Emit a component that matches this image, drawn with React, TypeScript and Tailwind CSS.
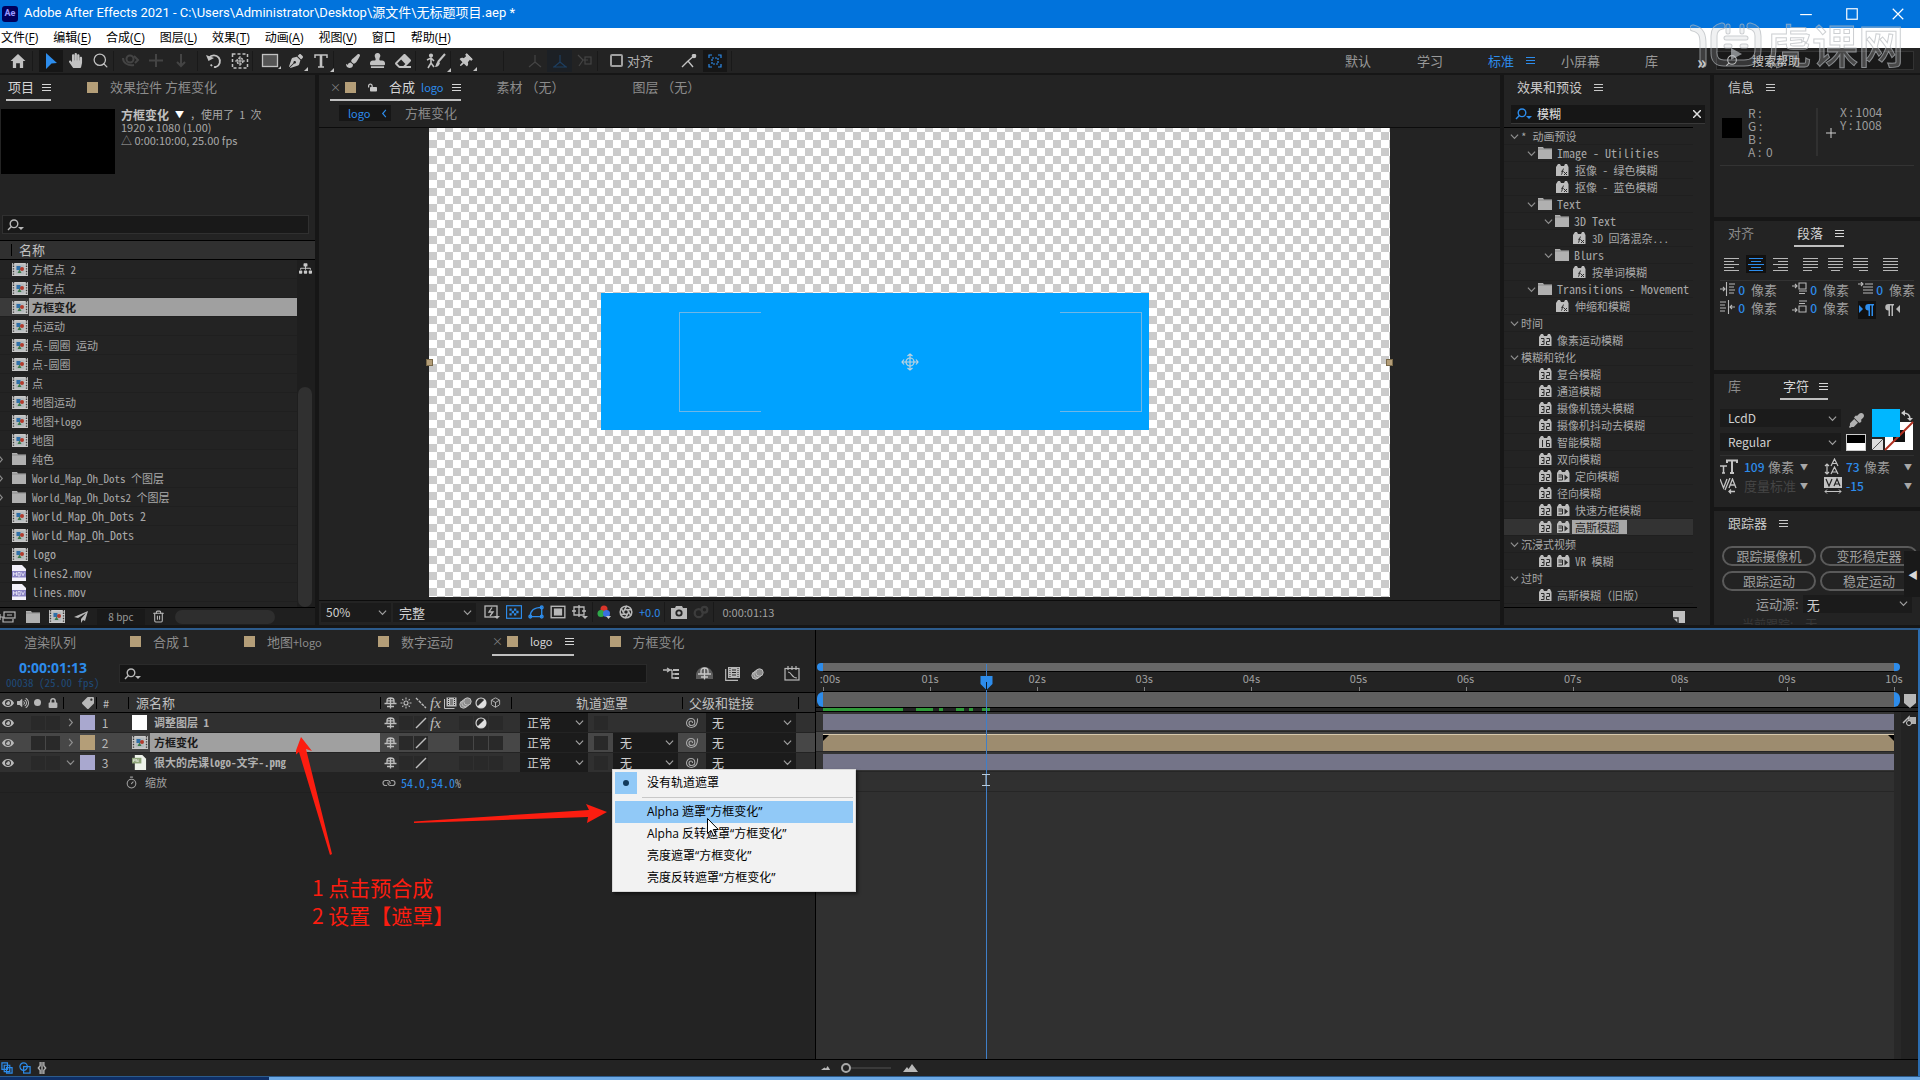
import React from "react";
import {
  FaHandPaper, FaPaintBrush, FaStamp, FaEraser, FaLock, FaLockOpen, FaVolumeUp, FaTag, FaPenNib,
  FaThumbtack, FaEyeDropper, FaSitemap, FaEye,
} from "react-icons/fa";
import { Search, Trash2, Box, Camera, Link, Aperture, Timer } from "lucide-react";

type Kids = { children?: React.ReactNode };

/* ---------- small drawings ---------- */

const Chevron = ({ open = true, className = "" }: { open?: boolean; className?: string }) => (
  <svg viewBox="0 0 10 10" className={`size-[9px] shrink-0 ${className}`} fill="none" stroke="currentColor" strokeWidth="1.3">
    {open ? <path d="M1 3l4 4 4-4" /> : <path d="M3.5 1l3.5 4-3.5 4" />}
  </svg>
);

const MenuLines = ({ className = "" }: { className?: string }) => (
  <svg viewBox="0 0 9 9" className={`size-[9px] shrink-0 ${className}`} stroke="currentColor" strokeWidth="1">
    <path d="M0 1.5h9M0 4.5h9M0 7.5h9" />
  </svg>
);

const Swatch = () => <span className="size-[11px] shrink-0 bg-[#b49e78]" />;

const Magnifier = ({ className = "text-[#b8b8b8]" }: { className?: string }) => (
  <svg viewBox="0 0 18 12" className={`h-3 w-[18px] shrink-0 ${className}`} fill="none" stroke="currentColor" strokeWidth="1.4">
    <circle cx="7" cy="4.8" r="3.8" />
    <path d="M4.3 7.6L1 11" />
    <path d="M11 8h6l-3 3z" fill="currentColor" stroke="none" />
  </svg>
);

const FilmIcon = () => (
  <svg viewBox="0 0 16 13" className="h-[13px] w-4 shrink-0">
    <rect width="16" height="13" fill="#c9c9c9" />
    <path d="M1.5 0v13M14.5 0v13" stroke="#3a3a3a" strokeWidth="1.4" strokeDasharray="1.4 1.2" />
    <rect x="3.5" y="1.5" width="9" height="10" fill="#b4babd" />
    <rect x="4.5" y="3" width="4" height="4" fill="#2f6fa8" />
    <circle cx="10" cy="6" r="2" fill="#b23a2c" />
    <path d="M5.5 10l2-3.5 2 3.5z" fill="#3c7a4a" />
  </svg>
);

const FolderIcon = ({ className = "" }: { className?: string }) => (
  <svg viewBox="0 0 14 12" className={`h-3 w-3.5 shrink-0 ${className}`} fill="#b0b0b0">
    <path d="M0 0h5l1 1.5h8V12H0z" />
    <path d="M0 2h14" stroke="#777" strokeWidth=".6" />
  </svg>
);

const MovIcon = () => (
  <svg viewBox="0 0 14 16" className="h-4 w-3.5 shrink-0">
    <path d="M0 0h10l4 4v12H0z" fill="#f2f0fa" />
    <rect y="6" width="14" height="6.5" fill="#8a83c4" />
    <path d="M1.5 11V7.5l1.5 2 1.5-2V11M6 7.5h2.2V11H6zM9.5 7.5l1.5 3.3 1.5-3.3" fill="none" stroke="#efeefa" strokeWidth=".8" />
  </svg>
);

const PngIcon = () => (
  <svg viewBox="0 0 16 16" className="size-[15px] shrink-0">
    <path d="M3 0h8l4 4v12H3z" fill="#eef2ea" />
    <rect y="3" width="10" height="6" fill="#8da377" />
    <path d="M1.5 7.5v-3h2v1.5h-2M4.5 7.5v-3l2 3v-3" stroke="#eef2ea" strokeWidth=".7" fill="none" />
  </svg>
);

const PresetIcon = () => (
  <svg viewBox="0 0 13 12" className="h-3 w-[13px] shrink-0">
    <path d="M0 3l2-3h2l1 2h3l1-2h2l1.5 3v9H0z" fill="#bdbdbd" />
    <path d="M5 10.5c1 0 1-1 1.3-3S7 5 8 5M5.3 7.3h2.5M8 8l3 3M11 8l-3 3" stroke="#2a2a2a" strokeWidth="1" fill="none" />
  </svg>
);

const BadgeIcon = ({ n }: { n: "32" | "16" | "gpu" }) => (
  <svg viewBox="0 0 13 12" className="h-3 w-[13px] shrink-0">
    <path d="M0 3l2-3h2l1 2h3l1-2h2l1.5 3v9H0z" fill="#bdbdbd" />
    {n === "32" && <path d="M2 4.5h3v3H3M5 7.5v3H2M7.5 4.5h3v3h-3v3h3" stroke="#2a2a2a" strokeWidth="1" fill="none" />}
    {n === "16" && <path d="M3.5 4v7M10.5 4.5h-3v6h3v-3h-3" stroke="#2a2a2a" strokeWidth="1" fill="none" />}
    {n === "gpu" && (
      <g>
        <path d="M1.5 5h4v2h-4M5.5 7v3h-4" stroke="#2a2a2a" strokeWidth="1" fill="none" />
        <path d="M7.5 4.5v6l3.5-3z" fill="#2a2a2a" />
      </g>
    )}
  </svg>
);

const ShyIcon = () => (
  <svg viewBox="0 0 13 12" className="h-3 w-[13px] shrink-0" fill="none" stroke="#bdbdbd" strokeWidth="1.3">
    <path d="M3 6V3.5C3 1.8 4.4 1 6.5 1S10 1.8 10 3.5V6M.5 6.5h12M3 9.5h7M6.500 1v10.500M3.500 3.800h6" />
  </svg>
);
const SunIcon = () => (
  <svg viewBox="0 0 12 12" className="size-3 shrink-0" fill="none" stroke="#bdbdbd" strokeWidth="1.1">
    <circle cx="6" cy="6" r="2" />
    <path d="M6 .5v2M6 9.5v2M.5 6h2M9.5 6h2M2.200 2.200l1.200 1.200M8.600 8.600l1.200 1.200M2.200 9.800l1.200-1.200M8.600 3.400l1.200-1.200" />
  </svg>
);
const SlashIcon = ({ back = false }: { back?: boolean }) => (
  <svg viewBox="0 0 12 12" className="size-3 shrink-0" stroke="#bdbdbd" strokeWidth="1.4">
    {back ? <path d="M1 1l10 10" strokeDasharray="3 1" /> : <path d="M1 11L11 1" />}
  </svg>
);
const FxIcon = () => <span className="font-['Liberation_Serif',serif] text-[15px] leading-3 text-[#bdbdbd] italic">fx</span>;
const FrameBlendIcon = () => (
  <svg viewBox="0 0 13 12" className="h-3 w-[13px] shrink-0">
    <path d="M2.5 .5h10v9h-10z" fill="#bdbdbd" />
    <path d="M.5 2v9.500h10" stroke="#bdbdbd" fill="none" />
    <path d="M4.500 1v8M10.500 1v8" stroke="#2a2a2a" strokeDasharray="1 1" />
    <path d="M6 3h3M6 5h3M6 7h3" stroke="#2a2a2a" strokeWidth=".8" />
  </svg>
);
const MotionBlurIcon = () => (
  <svg viewBox="0 0 13 12" className="h-3 w-[13px] shrink-0" fill="#8a8a8a" stroke="#c4c4c4" strokeWidth=".9">
    <circle cx="4.5" cy="7.5" r="3.7" />
    <circle cx="6.5" cy="6" r="3.7" />
    <circle cx="8.5" cy="4.5" r="3.7" />
  </svg>
);
const AdjustIcon = () => (
  <svg viewBox="0 0 12 12" className="size-3 shrink-0">
    <circle cx="6" cy="6" r="5" fill="none" stroke="#d0d0d0" strokeWidth="1.2" />
    <path d="M9.600 2.400A5 5 0 112.400 9.600z" fill="#e0e0e0" />
  </svg>
);
const SpiralIcon = () => (
  <svg viewBox="0 0 14 12" className="h-3 w-3.5" fill="none" stroke="#a8a8a8" strokeWidth="1.1">
    <path d="M12.5 1.5c.5 5-2 9-6 9C3.500 10.500 1.500 8.500 1.500 6S3.500 1.500 6 1.500s3.800 1.800 3.800 4S8.200 8.500 6.500 8.500 4 7.500 4 6.200 5 4 6 4s1.600.800 1.400 2" />
  </svg>
);

const AlignLines = ({ rows, className = "" }: { rows: string; className?: string }) => (
  <svg viewBox="0 0 16 14" className={`h-3.5 w-4 shrink-0 ${className}`} stroke="currentColor" strokeWidth="1" fill="none">
    <path d={rows} />
  </svg>
);

/* ---------- shared parts ---------- */

const Tab = ({ active, children, className = "gap-2" }: Kids & { active?: boolean; className?: string }) => (
  <button
    className={`flex h-[26px] shrink-0 items-center border-b-2 text-[13px] whitespace-nowrap ${
      active ? "border-[#c0c0c0] text-[#d6d6d6]" : "border-transparent text-[#8c8c8c]"
    } ${className}`}
  >
    {children}
  </button>
);

function Drop({ label, value, className = "", selectClass = "pl-2" }: { label: string; value: string; className?: string; selectClass?: string }) {
  return (
    <span className={`relative flex items-center bg-[#1b1b1b] ${className}`}>
      <select aria-label={label} className={`h-full w-full appearance-none bg-transparent text-[#d0d0d0] outline-none ${selectClass}`}>
        <option>{value}</option>
      </select>
      <Chevron className="pointer-events-none absolute right-1 text-[#a0a0a0]" />
    </span>
  );
}

const Sep = ({ className = "" }: { className?: string }) => <span className={`h-5 w-px shrink-0 bg-[#191919] ${className}`} />;

/* ---------- title, menus, toolbar ---------- */

const menus = ["文件(F)", "编辑(E)", "合成(C)", "图层(L)", "效果(T)", "动画(A)", "视图(V)", "窗口", "帮助(H)"];

function MenuLabel({ text }: { text: string }) {
  const m = text.match(/^(.*\()(.)(\))$/);
  return m ? <>{m[1]}<u className="underline-offset-2">{m[2]}</u>{m[3]}</> : <>{text}</>;
}

const ToolBtn = ({ label, active, children, dim, className = "w-[25px]" }: Kids & { label: string; active?: boolean; dim?: boolean; className?: string }) => (
  <button
    aria-label={label}
    className={`flex h-[22px] shrink-0 items-center justify-center ${className} ${active ? "bg-[#161616] text-[#2d8ceb]" : dim ? "text-[#444]" : "text-[#c2c2c2]"}`}
  >
    {children}
  </button>
);

const Corner = ({ children }: Kids) => (
  <span className="relative flex items-center">
    {children}
    <svg viewBox="0 0 4 4" className="absolute -right-[5px] -bottom-[3px] size-1" fill="currentColor"><path d="M4 0v4H0z" /></svg>
  </span>
);

function Header() {
  return (
    <header className="shrink-0">
      <div className="flex h-7 items-center bg-[#0173dc] pl-0.5 font-['Roboto','Noto_Sans_CJK_SC',sans-serif] text-[13px] text-white">
        <span className="mr-1.5 flex size-4 items-center justify-center rounded-[3px] bg-[#00005b] text-[9px] font-bold text-[#9999ff]">Ae</span>
        <h1 className="-mt-0.5">Adobe After Effects 2021 - C:\Users\Administrator\Desktop\源文件\无标题项目.aep *</h1>
        <div className="ml-auto flex items-center gap-8 pr-[15px]">
          <button aria-label="最小化"><svg viewBox="0 0 12 12" className="size-3.5" stroke="white"><path d="M1 6.500h10" /></svg></button>
          <button aria-label="最大化"><svg viewBox="0 0 12 12" className="size-3.5" stroke="white" fill="none"><rect x="1.500" y="1.500" width="9" height="9" /></svg></button>
          <button aria-label="关闭"><svg viewBox="0 0 12 12" className="size-3.5" stroke="white"><path d="M1.500 1.500l9 9M10.500 1.500l-9 9" /></svg></button>
        </div>
      </div>
      <nav className="flex h-5 items-center gap-[15px] bg-white pl-px font-['Open_Sans','Noto_Sans_CJK_SC',sans-serif] text-[12px] text-black">
        {menus.map((m) => <button key={m} className="whitespace-nowrap"><MenuLabel text={m} /></button>)}
      </nav>
      <div className="flex h-[25px] items-center bg-[#232323]">
        <div className="flex items-center pl-1">
          <ToolBtn label="主页" className="w-7"><svg viewBox="0 0 16 15" className="h-[14px] w-4" fill="currentColor"><path d="M8 0l8 7.500h-2.500V15H10v-5H6v5H2.500V7.500H0z" /></svg></ToolBtn>
          <Sep />
          <ToolBtn label="选取工具" active className="ml-1.5 w-6"><svg viewBox="0 0 14 16" className="h-4 w-3.5" fill="currentColor"><path d="M2 0l11 10-5.500.5L2 16z" /></svg></ToolBtn>
          <ToolBtn label="手形工具"><FaHandPaper size={15} /></ToolBtn>
          <ToolBtn label="缩放工具"><Search size={17} strokeWidth={1.8} /></ToolBtn>
          <Sep />
          <ToolBtn label="绕光标旋转工具" dim className="ml-1 w-[25px]"><svg viewBox="0 0 18 14" className="h-3.5 w-[18px]" fill="none" stroke="currentColor" strokeWidth="2"><circle cx="8" cy="5" r="3.500" /><path d="M1 4c0 5 5 8 11 7M12 2l4 4-3 3" /></svg></ToolBtn>
          <ToolBtn label="在光标下移动工具" dim><svg viewBox="0 0 16 16" className="size-4" fill="none" stroke="currentColor" strokeWidth="2"><path d="M8 1v13M1 7.500h14" /></svg></ToolBtn>
          <ToolBtn label="向光标方向推拉镜头工具" dim><svg viewBox="0 0 16 16" className="size-4" fill="none" stroke="currentColor" strokeWidth="2"><path d="M8 1v11M4 9l4 4 4-4" /></svg></ToolBtn>
          <Sep className="ml-1" />
          <ToolBtn label="旋转工具" className="ml-1 w-[25px]"><svg viewBox="0 0 17 16" className="h-4 w-[17px]" fill="none" stroke="currentColor" strokeWidth="1.8"><path d="M3 5a6 6 0 1 1 7 9" /><path d="M10 14a6 6 0 0 1-6-4" strokeDasharray="2 2" /><path d="M0 2l2.500 6L8 5z" fill="currentColor" stroke="none" /></svg></ToolBtn>
          <ToolBtn label="锚点工具"><svg viewBox="0 0 18 16" className="h-4 w-[18px]" fill="none" stroke="currentColor" strokeWidth="1.500"><rect x="1.500" y="1" width="15" height="14" strokeDasharray="3 2" /><circle cx="9" cy="8" r="3" strokeDasharray="2 1" /><path d="M9 3v10M4 8h10" strokeWidth="1" /></svg></ToolBtn>
          <Sep />
          <ToolBtn label="矩形工具" className="ml-[5px] w-[25px]"><svg viewBox="0 0 20 16" className="h-4 w-5"><rect x="1.500" y="1.500" width="15" height="12" fill="#555" stroke="currentColor" strokeWidth="1.300" /><path d="M20 16h-3l3-3z" fill="currentColor" /></svg></ToolBtn>
          <ToolBtn label="钢笔工具"><Corner><FaPenNib size={14} /></Corner></ToolBtn>
          <ToolBtn label="文字工具"><Corner><svg viewBox="0 0 16 16" className="size-4" fill="none" stroke="currentColor"><path d="M2 5V2h12v3" strokeWidth="1.500" /><path d="M8 2v12" strokeWidth="2.600" /><path d="M5 14h6" strokeWidth="1.500" /></svg></Corner></ToolBtn>
          <Sep />
          <ToolBtn label="画笔工具" className="ml-1.5 w-[25px]"><FaPaintBrush size={14} /></ToolBtn>
          <ToolBtn label="仿制图章工具"><FaStamp size={15} /></ToolBtn>
          <ToolBtn label="橡皮擦工具"><FaEraser size={16} /></ToolBtn>
          <Sep />
          <ToolBtn label="Roto 笔刷工具" className="ml-1.5 w-7"><Corner><svg viewBox="0 0 20 16" className="h-4 w-5" fill="none" stroke="currentColor" strokeWidth="1.600"><circle cx="5" cy="2.500" r="1.300" fill="currentColor" /><path d="M1 7l4-2 3 3M5 5v5l-3 5M5 10l3 4" /><path d="M19 1l-7 8" strokeWidth="2" /><path d="M12 8l2 2c-1 3-3 4-5 4 1-2 1-4 3-6z" fill="currentColor" stroke="none" /></svg></Corner></ToolBtn>
          <Sep />
          <ToolBtn label="人偶位置控点工具" className="w-7"><Corner><FaThumbtack size={14} className="rotate-45" /></Corner></ToolBtn>
        </div>
        <div className="ml-6 flex items-center">
          <Sep />
          <div className="ml-[18px] flex">
            <ToolBtn label="本地轴模式" dim><svg viewBox="0 0 16 14" className="h-3.5 w-4" fill="none" stroke="currentColor" strokeWidth="1.200"><path d="M8 1v7M8 8l-6 5M8 8l6 5" /></svg></ToolBtn>
            <ToolBtn label="世界轴模式" className="w-[25px] bg-[#1c2025]"><svg viewBox="0 0 16 14" className="h-3.5 w-4 text-[#1d3e60]" fill="none" stroke="currentColor" strokeWidth="1.200"><path d="M8 1v7M8 8l-6 5M8 8l6 5M1 13h14" /></svg></ToolBtn>
            <ToolBtn label="视图轴模式" dim><svg viewBox="0 0 16 14" className="h-3.5 w-4" fill="none" stroke="currentColor" strokeWidth="1.200"><path d="M1 1l5 5M6 6l-4 6M6 6h5" /><rect x="8" y="3" width="6" height="7" /></svg></ToolBtn>
          </div>
          <Sep />
          <label className="ml-3 flex items-center gap-1 text-[13px] text-[#b0b0b0]">
            <input type="checkbox" className="size-[13px] appearance-none rounded-[2px] border-2 border-[#a0a0a0]" />对齐
          </label>
          <ToolBtn label="对齐边缘" className="ml-[22px] w-7"><svg viewBox="0 0 16 14" className="h-3.5 w-4" fill="none" stroke="currentColor" strokeWidth="1.400"><path d="M1 13l6-6 5 6M7 7l7-6" /><circle cx="13" cy="2" r="1.600" fill="currentColor" /></svg></ToolBtn>
          <ToolBtn label="对齐到特性" active className="w-6"><svg viewBox="0 0 14 14" className="size-3.5" fill="none" stroke="currentColor" strokeWidth="1.200"><path d="M1 4V1h3M10 1h3v3M13 10v3h-3M4 13H1v-3" /><rect x="4" y="4" width="6" height="6" strokeDasharray="2 1" /></svg></ToolBtn>
          <Sep className="ml-1" />
        </div>
        <div className="ml-auto flex h-full items-center text-[13px] text-[#9a9a9a]">
          <button className="w-[72px] text-left">默认</button>
          <button className="w-[71px] text-left">学习</button>
          <button className="flex w-[73px] items-center gap-3 text-left text-[#2d8ceb]">标准<MenuLines /></button>
          <button className="w-[84px] text-left">小屏幕</button>
          <button className="w-[52px] text-left">库</button>
          <button aria-label="更多" className="w-[19px] text-left text-[18px] leading-4 font-bold text-[#d0d0d0]">»</button>
          <label className="mr-1.5 flex h-[19px] w-[198px] items-center border border-[#333] bg-[#191919] pl-2">
            <Search size={13} className="mr-3.5 shrink-0 -scale-x-100 text-[#c0c0c0]" />
            <input aria-label="搜索帮助" placeholder="搜索帮助" className="w-full bg-transparent text-[12px] outline-none placeholder:text-[#c8c8c8]" />
          </label>
        </div>
      </div>
    </header>
  );
}

/* ---------- project panel ---------- */

type Item = { name: string; kind: "comp" | "folder" | "mov"; sel?: boolean };
const items: Item[] = [
  { name: "方框点 2", kind: "comp" }, { name: "方框点", kind: "comp" }, { name: "方框变化", kind: "comp", sel: true },
  { name: "点运动", kind: "comp" }, { name: "点-圆圈 运动", kind: "comp" }, { name: "点-圆圈", kind: "comp" },
  { name: "点", kind: "comp" }, { name: "地图运动", kind: "comp" }, { name: "地图+logo", kind: "comp" },
  { name: "地图", kind: "comp" }, { name: "纯色", kind: "folder" }, { name: "World_Map_Oh_Dots 个图层", kind: "folder" },
  { name: "World_Map_Oh_Dots2 个图层", kind: "folder" }, { name: "World_Map_Oh_Dots 2", kind: "comp" },
  { name: "World_Map_Oh_Dots", kind: "comp" }, { name: "logo", kind: "comp" }, { name: "lines2.mov", kind: "mov" },
  { name: "lines.mov", kind: "mov" },
];

const mono = "font-['Noto_Sans_Mono_CJK_SC','Noto_Sans_CJK_SC',monospace]";
const isLatin = (s: string) => /^[\x20-\x7e]+$/.test(s);

function ProjectPanel() {
  return (
    <section className="flex w-[315px] shrink-0 flex-col bg-[#232323]">
      <div className="flex pl-1.5">
        <Tab active className="gap-2 pl-0.5">项目<MenuLines /></Tab>
        <Tab className="ml-9 gap-3"><Swatch />效果控件 方框变化</Tab>
      </div>
      <div className="mt-2 flex h-[65px] gap-1.5 pl-px">
        <div className="h-[65px] w-[114px] shrink-0 bg-black" />
        <div className="-mt-0.5 text-[11px] leading-[13px] text-[#a8a8a8]">
          <p className="flex h-[14px] items-center gap-1.5 text-[12px]"><b className="text-[#c0c0c0]">方框变化</b><span className="text-[9px] text-white">▼</span><span className={`${mono} text-[11px]`}>，使用了 1 次</span></p>
          <p>1920 x 1080 (1.00)</p>
          <p>△ 0:00:10:00, 25.00 fps</p>
        </div>
      </div>
      <label className="mt-[41px] mr-1.5 ml-0.5 flex h-[19px] items-center border border-[#303030] bg-[#191919] pl-1">
        <Magnifier />
        <input aria-label="搜索项目" className="w-full bg-transparent outline-none" />
      </label>
      <div className="mt-1.5 flex h-5 items-center border-y border-black bg-[#303030] pl-[11px] text-[13px] text-[#c0c0c0]">
        <span className="mr-[7px] h-3 w-px bg-black" />名称
      </div>
      <div className="flex min-h-0 flex-1">
        <ul className={`flex-1 ${mono} text-[#a8a8a8]`}>
          {items.map((it, i) => (
            <li key={i} className={`flex h-[19px] items-center border-b border-[#1f1f1f] whitespace-pre ${isLatin(it.name) ? "text-[12px]" : "text-[11px]"} ${it.sel ? "bg-[#3a3a3a]" : ""}`}>
              <span className="flex w-3 items-center text-[#8a8a8a]">{it.kind === "folder" && <Chevron open={false} className="-ml-1" />}</span>
              <span className="flex w-[17px] shrink-0 items-center">
                {it.kind === "comp" ? <FilmIcon /> : it.kind === "mov" ? <MovIcon /> : <FolderIcon />}
              </span>
              <span className={`flex h-full flex-1 items-center pl-[3px] ${it.sel ? "bg-[#a0a0a0] font-bold text-[#1a1a1a]" : ""}`}>{it.name}</span>
            </li>
          ))}
        </ul>
        <div className="flex w-[18px] flex-col items-center bg-[#1e1e1e] pr-0.5">
          <FaSitemap size={13} className="mt-0.5 shrink-0 text-[#c8c8c8]" />
          <span className="mt-[112px] w-[14px] flex-1 rounded-full bg-[#303030]" />
        </div>
      </div>
      <div className="flex h-[18px] items-center border-t border-black bg-[#1f1f1f] text-[#b8b8b8]">
        <button aria-label="解释素材" className="w-6"><svg viewBox="0 0 16 12" className="h-3 w-4" fill="none" stroke="currentColor" strokeWidth="1.200"><rect x="4" y="1" width="11" height="6" /><path d="M7 4h5M0 6h3v5h10V8M0 3v6" /></svg></button>
        <button aria-label="新建文件夹" className="ml-0.5 w-[23px]"><FolderIcon /></button>
        <button aria-label="新建合成" className="w-[25px]"><FilmIcon /></button>
        <button aria-label="项目设置" className="w-[23px]"><svg viewBox="0 0 14 12" className="h-3 w-3.5" fill="currentColor"><path d="M14 0L0 6l4 1 8-5-5 6v4l2-3 2 1z" /></svg></button>
        <button className="h-4 w-12 bg-[#191919] text-[10px] leading-4 text-[#999]">8 bpc</button>
        <button aria-label="删除" className="ml-[7px]"><Trash2 size={13} /></button>
        <span className="ml-2.5 h-[14px] w-[100px] rounded-full bg-[#2e2e2e]" />
      </div>
    </section>
  );
}

/* ---------- composition panel ---------- */

function CompPanel() {
  return (
    <section className="flex min-w-0 flex-1 flex-col bg-[#232323]">
      <div className="flex pl-[11px]">
        <Tab active className="gap-1.5">
          <span className="w-[9px] text-left text-[11px] text-[#808080]">×</span><Swatch />
          <FaLockOpen size={9} className="mx-1.5 -scale-x-100 text-[#c8c8c8]" />合成<span className="text-[11px] text-[#2d8ceb]">logo</span><MenuLines className="ml-0.5" />
        </Tab>
        <Tab className="ml-9">素材 （无）</Tab>
        <Tab className="ml-[68px]">图层 （无）</Tab>
      </div>
      <div className="flex h-[26px] items-center pb-0.5 pl-5 text-[13px]">
        <button className="flex h-4 w-[52px] items-center justify-between bg-[#161616] pr-0.5 pl-[9px] text-[11px] text-[#2d8ceb]">logo<Chevron open={false} className="-scale-x-100" /></button>
        <button className="ml-3.5 text-[#8c8c8c]">方框变化</button>
      </div>
      <div className="flex min-h-0 flex-1 justify-center overflow-hidden border-y border-[#0c0c0c] bg-[#232323] px-[110px]">
        <div className="relative w-full overflow-visible">
          <div className="h-[469px] bg-[repeating-conic-gradient(#cbcbcb_0_25%,#ffffff_0_50%)] bg-[length:16px_16px] bg-[position:0_4px]" />
          <div className="absolute top-[165px] left-[17.9%] h-[137px] w-[57%] bg-[#00a2ff]">
            <span className="absolute top-[19px] left-[14.2%] h-[100px] w-[15%] border-y border-l border-[#6fb6e6]" />
            <span className="absolute top-[19px] right-[1.3%] h-[100px] w-[15%] border-y border-r border-[#6fb6e6]" />
          </div>
          <svg viewBox="0 0 18 18" className="absolute top-[225px] left-1/2 size-[18px] -translate-x-1/2" fill="none" stroke="#c0d4e0" strokeWidth="1.200">
            <circle cx="9" cy="9" r="4" /><path d="M9 1v16M1 9h16M6.500 3L9 1l2.500 2M6.500 15L9 17l2.500-2M3 6.500L1 9l2 2.500M15 6.500L17 9l-2 2.500" />
          </svg>
          <span className="absolute top-[231px] -left-[3px] size-[7px] border border-[#7a6a4a] bg-[#b49e78]" />
          <span className="absolute top-[231px] -right-[3px] size-[7px] border border-[#7a6a4a] bg-[#b49e78]" />
        </div>
      </div>
      <div className="flex h-6 items-center pb-0.5 pl-0.5 text-[12px] text-[#b8b8b8]">
        <Drop label="放大率" value="50%" className="h-[19px] w-[70px]" selectClass="pl-[5px]" />
        <Drop label="分辨率" value="完整" className="ml-0.5 h-[19px] w-[83px] text-[13px]" selectClass="pl-1.5" />
        <div className="ml-2 flex items-center gap-1.5">
          <svg viewBox="0 0 16 14" className="h-3.5 w-4" fill="none" stroke="currentColor" strokeWidth="1.300"><rect x="1" y="1" width="12" height="11" /><path d="M8 2.500L5 7h4l-3 4" /><path d="M10 11h6l-3 3z" fill="currentColor" stroke="none" /></svg>
          <svg viewBox="0 0 14 12" className="h-3.5 w-4 text-[#2d8ceb]"><rect x=".5" y=".5" width="13" height="11" fill="none" stroke="currentColor" /><path d="M3 3h2v2H3zM7 3h2v2H7zM5 5h2v2H5zM9 5h2v2H9zM3 7h2v2H3zM7 7h2v2H7z" fill="currentColor" /></svg>
          <svg viewBox="0 0 14 12" className="h-3.5 w-4 text-[#2d8ceb]" fill="none" stroke="currentColor" strokeWidth="1.200"><path d="M2 10c0-5 3-8 10-8v8z" /><circle cx="2" cy="10" r="1.200" /><circle cx="12" cy="2" r="1.200" /><circle cx="12" cy="10" r="1.200" /></svg>
          <svg viewBox="0 0 14 12" className="h-3.5 w-4" stroke="currentColor" strokeWidth="1.200"><rect x="1" y="1" width="12" height="10" fill="none" /><rect x="4" y="3.500" width="6" height="5" fill="currentColor" /></svg>
          <svg viewBox="0 0 16 14" className="h-3.5 w-4" fill="none" stroke="currentColor" strokeWidth="1.300"><path d="M2 2h10v8H2zM7 0v12M0 6h4M10 6h4" /><path d="M10 11h6l-3 3z" fill="currentColor" stroke="none" /></svg>
          <Sep className="-mx-0.5" />
          <svg viewBox="0 0 14 14" className="size-[14px]"><circle cx="7" cy="4" r="3.500" fill="#d8352a" /><circle cx="4" cy="8.500" r="3.500" fill="#2fa84a" /><circle cx="9.500" cy="8.500" r="3.500" fill="#3a6fe0" /><path d="M9 11h5l-2.500 3z" fill="#ccc" /></svg>
          <Aperture size={14} strokeWidth={2.6} className="ml-0.5" />
          <span className="text-[11px] text-[#2d8ceb]">+0.0</span>
          <Sep className="-ml-0.5" />
          <svg viewBox="0 0 16 13" className="h-[13px] w-4" fill="currentColor"><path d="M5 0h6l1 2h4v11H0V2h4z" /><circle cx="8" cy="7" r="3.600" fill="#232323" /><circle cx="8" cy="7" r="1.800" /></svg>
          <svg viewBox="0 0 14 12" className="h-3.5 w-4 text-[#3c3c3c]" fill="none" stroke="currentColor" strokeWidth="2"><circle cx="5" cy="7" r="3.500" /><circle cx="10" cy="4" r="2.500" /></svg>
          <Sep className="-mx-0.5" />
          <span className="ml-1 text-[11px] text-[#a0a0a0]">0:00:01:13</span>
        </div>
      </div>
    </section>
  );
}

/* ---------- effects panel ---------- */

type Fx = { k: "cat" | "f1" | "f2" | "p1" | "p2" | "fx"; t: string; i?: "32" | "16"; gpu?: boolean; star?: boolean; sel?: boolean };
const fxRows: Fx[] = [
  { k: "cat", t: "动画预设", star: true }, { k: "f1", t: "Image - Utilities" }, { k: "p1", t: "抠像 - 绿色模糊" },
  { k: "p1", t: "抠像 - 蓝色模糊" }, { k: "f1", t: "Text" }, { k: "f2", t: "3D Text" }, { k: "p2", t: "3D 回落混杂..." },
  { k: "f2", t: "Blurs" }, { k: "p2", t: "按单词模糊" }, { k: "f1", t: "Transitions - Movement" }, { k: "p1", t: "伸缩和模糊" },
  { k: "cat", t: "时间" }, { k: "fx", t: "像素运动模糊" }, { k: "cat", t: "模糊和锐化" }, { k: "fx", t: "复合模糊" },
  { k: "fx", t: "通道模糊" }, { k: "fx", t: "摄像机镜头模糊" }, { k: "fx", t: "摄像机抖动去模糊" }, { k: "fx", t: "智能模糊", i: "16" },
  { k: "fx", t: "双向模糊" }, { k: "fx", t: "定向模糊", gpu: true }, { k: "fx", t: "径向模糊" }, { k: "fx", t: "快速方框模糊", gpu: true },
  { k: "fx", t: "高斯模糊", gpu: true, sel: true }, { k: "cat", t: "沉浸式视频" }, { k: "fx", t: "VR 模糊", gpu: true },
  { k: "cat", t: "过时" }, { k: "fx", t: "高斯模糊（旧版）" },
];
const fxPad = { cat: "pl-1.5", f1: "pl-[23px]", f2: "pl-10", p1: "pl-[52px]", p2: "pl-[69px]", fx: "pl-[35px]" };

function EffectsPanel() {
  return (
    <section className="flex w-[206px] shrink-0 flex-col bg-[#232323]">
      <div className="flex pl-[13px]"><Tab className="gap-3"><span className="text-[#c8c8c8]">效果和预设</span><MenuLines className="text-[#c8c8c8]" /></Tab></div>
      <label className="mt-1 mr-[5px] ml-[7px] flex h-[19px] items-center border-b border-[#383838] bg-[#161616] pr-1 pl-1">
        <Magnifier className="text-[#2d8ceb]" />
        <input aria-label="搜索效果" defaultValue="模糊" className="ml-1 w-full min-w-0 bg-transparent text-[12px] text-[#e0e0e0] outline-none" />
        <svg viewBox="0 0 8 8" className="size-2 shrink-0" stroke="#e0e0e0" strokeWidth="1.500"><path d="M0 0l8 8M8 0L0 8" /></svg>
      </label>
      <ul className={`mt-[3px] mr-[17px] flex-1 border-t border-black ${mono} text-[#a8a8a8]`}>
        {fxRows.map((r, i) => (
          <li key={i} className={`flex h-[17px] items-center border-b border-[#1f1f1f] whitespace-pre ${isLatin(r.t) ? "text-[12px]" : "text-[11px]"} ${fxPad[r.k]} ${r.sel ? "bg-[#333]" : ""}`}>
            {(r.k === "cat" || r.k === "f1" || r.k === "f2") && <Chevron className="mr-0.5 text-[#909090]" />}
            {r.star && <span className="mr-1.5">*</span>}
            {(r.k === "f1" || r.k === "f2") && <FolderIcon className="mr-[5px]" />}
            {(r.k === "p1" || r.k === "p2") && <span className="mr-1.5"><PresetIcon /></span>}
            {r.k === "fx" && <span className="mr-[5px] flex gap-[5px]"><BadgeIcon n={r.i ?? "32"} />{r.gpu && <BadgeIcon n="gpu" />}</span>}
            <span className={r.sel ? "-ml-[3px] bg-[#a8a8a8] pr-2 pl-[3px] leading-[14px] text-[#222]" : ""}>{r.t}</span>
          </li>
        ))}
      </ul>
      <div className="mr-[13px] flex h-[18px] items-center justify-end border-t border-black pr-3">
        <svg viewBox="0 0 12 12" className="size-3"><path d="M0 0h12v12H5L0 7z" fill="#c0c0c0" /><path d="M0 7h5v5" fill="none" stroke="#333" strokeWidth="1.500" /></svg>
      </div>
    </section>
  );
}

/* ---------- right column ---------- */

const Num = ({ v }: { v: string }) => <span className="text-[12px] font-medium text-[#2d8ceb]">{v}</span>;
const IndentIcon = ({ d }: { d: string }) => (
  <svg viewBox="0 0 16 15" className="h-[15px] w-4 shrink-0" fill="none" stroke="#b8b8b8" strokeWidth="1.100"><path d={d} /></svg>
);

const L = {
  left: "M0 1.500h15M0 4.500h10M0 7.500h15M0 10.500h10M0 13.500h15",
  center: "M1 1.500h14M3 4.500h10M0 7.500h16M3 10.500h10M1 13.500h14",
  right: "M0 1.500h15M5 4.500h10M0 7.500h15M5 10.500h10M0 13.500h15",
  jl: "M0 1.500h15M0 4.500h15M0 7.500h15M0 10.500h15M0 13.500h9",
  jc: "M0 1.500h15M0 4.500h15M0 7.500h15M0 10.500h15M3 13.500h9",
  jr: "M0 1.500h15M0 4.500h15M0 7.500h15M0 10.500h15M6 13.500h9",
  jf: "M0 1.500h15M0 4.500h15M0 7.500h15M0 10.500h15M0 13.500h15",
};

const Indent = ({ d, className = "" }: { d: string; className?: string }) => (
  <span className={`flex shrink-0 items-center ${className}`}><IndentIcon d={d} /><span className="w-[9px] text-right"><Num v="0" /></span><span className="ml-1.5 whitespace-nowrap">像素</span></span>
);
const Tri = () => <span className="text-[8px] text-[#a8a8a8]">▼</span>;

function RightColumn() {
  return (
    <aside className="relative flex w-[206px] shrink-0 flex-col gap-1 text-[13px] text-[#9c9c9c]">
      <section className="h-[142px] shrink-0 bg-[#232323]">
        <div className="flex pl-3.5"><Tab><span className="text-[#c8c8c8]">信息</span><MenuLines className="ml-1 text-[#c8c8c8]" /></Tab></div>
        <div className="mx-1.5 flex h-[65px] border-b border-[#333] pt-[5px] text-[12px] leading-[13px]">
          <span className="mt-3 ml-0.5 size-5 bg-black" />
          <dl className="ml-1.5 grid h-[52px] w-[68px] grid-cols-[18px_1fr]"><dt>R :</dt><dd /><dt>G :</dt><dd /><dt>B :</dt><dd /><dt>A :</dt><dd>0</dd></dl>
          <span className="mt-0.5 h-12 w-0.5 bg-[#303030]" />
          <svg viewBox="0 0 10 10" className="mt-[22px] ml-2 size-2.5" stroke="#d0d0d0"><path d="M5 0v10M0 5h10" /></svg>
          <div className="-mt-px ml-1"><p>X : 1004</p><p>Y : 1008</p></div>
        </div>
      </section>
      <section className="h-[149px] shrink-0 bg-[#232323]">
        <div className="flex pl-3.5"><Tab className="w-[66px]">对齐</Tab><Tab active className="gap-3 pl-[3px]">段落<MenuLines /></Tab></div>
        <div className="flex h-[33px] items-center pl-2.5 text-[#b8b8b8]">
          <AlignLines rows={L.left} />
          <span className="ml-1.5 flex h-[18px] w-5 items-center justify-center bg-[#111] text-[#2d8ceb]"><AlignLines rows={L.center} /></span>
          <AlignLines rows={L.right} className="ml-[7px]" /><AlignLines rows={L.jl} className="ml-3.5" />
          <AlignLines rows={L.jc} className="ml-[9px]" /><AlignLines rows={L.jr} className="ml-[9px]" /><AlignLines rows={L.jf} className="ml-3.5" />
        </div>
        <div className="mx-1.5 h-px bg-[#333]" />
        <div className="flex h-[17px] items-center gap-2 pl-1.5">
          <Indent className="w-16" d="M0 7h5M3 5l2 2-2 2M6.500 0v14M9 2h6M9 5h5M9 8h6M9 11h5" />
          <Indent className="w-[58px]" d="M0 4h5M3 2l2 2-2 2M7 1h7v6H7zM7 9h8M7 11.500h6" />
          <Indent className="w-[58px]" d="M0 2h5M3 0l2 2-2 2M7 2h8M5 5h10M5 8h10M5 11h10" />
        </div>
        <div className="flex h-[19px] items-center gap-2 pl-1.5">
          <Indent className="w-16" d="M0 2h6M0 5h5M0 8h6M0 11h5M8.500 0v14M15 7h-5M12 5l-2 2 2 2" />
          <Indent className="w-[58px]" d="M7 1h8M7 3.500h6M7 6h7v6H7zM0 10h5M3 8l2 2-2 2" />
          <span className="mt-1 flex h-[18px] w-[18px] items-center justify-center bg-[#111]"><svg viewBox="0 0 16 12" className="h-3 w-4" fill="#2d8ceb"><path d="M0 1l4 4-4 4zM15 0v1.500h-1V12h-1.500V1.500H11V12H9.500V6.500a3.200 3.200 0 010-6.500z" /></svg></span>
          <svg viewBox="0 0 16 12" className="mt-1 h-3 w-4" fill="#b8b8b8"><path d="M16 1l-4 4 4 4zM10 0v1.500H9V12H7.500V1.500H6V12H4.500V6.500a3.200 3.200 0 010-6.500z" /></svg>
        </div>
      </section>
      <section className="h-[133px] shrink-0 bg-[#232323]">
        <div className="flex pl-3.5"><Tab className="w-[52px]">库</Tab><Tab active className="gap-2.5 pl-[3px]">字符<MenuLines /></Tab></div>
        <div className="flex pt-[9px] pl-1.5">
          <div className="flex flex-col gap-1.5 text-[12px]">
            <Drop label="字体" value="LcdD" className="h-[18px] w-[121px]" />
            <Drop label="样式" value="Regular" className="h-[18px] w-[121px]" />
          </div>
          <div className="ml-[5px] flex flex-col items-center gap-1.5">
            <FaEyeDropper size={15} className="mt-1 text-[#b0b0b0]" />
            <span className="h-[17px] w-5 border border-[#ccc] bg-[linear-gradient(#000_50%,#fff_50%)]" />
          </div>
          <svg viewBox="0 0 42 42" className="ml-1.5 size-[42px]">
            <rect x="13" y="13" width="28" height="28" fill="#fff" /><rect x="21" y="21" width="12" height="12" fill="#111" />
            <path d="M13 41L41 13" stroke="#b03020" strokeWidth="2" /><rect width="28" height="28" fill="#00b7ff" />
            <rect y="30" width="11" height="11" fill="#ddd" /><path d="M0 41l11-11" stroke="#555" />
            <path d="M31 4c5 0 7 2 7 6" stroke="#ccc" fill="none" strokeWidth="1.500" /><path d="M29 4l4-3v6zM38 12l-3-3h6z" fill="#ccc" />
          </svg>
        </div>
        <div className="mx-1.5 mt-1 h-px bg-[#303030]" />
        <div className="grid grid-cols-[24px_24px_32px_24px_22px_18px_40px_1fr] items-center pt-px pl-1.5 leading-[19px]">
          <svg viewBox="0 0 18 15" className="h-[15px] w-[18px]" fill="none" stroke="#c4c4c4"><path d="M0 7h7M3.500 7v7M2 14h3" strokeWidth="1.500" /><path d="M7 4V1.500h10V4M12 2v12M10 14h4" strokeWidth="2" /></svg>
          <Num v="109" /><span className="whitespace-nowrap">像素</span><Tri />
          <svg viewBox="0 0 18 17" className="h-[17px] w-[18px]" fill="none" stroke="#c4c4c4" strokeWidth="1.200"><path d="M3 6v10M1 8l2-2 2 2M1 14l2 2 2-2M7 8l3.500-7L14 8M8.500 5.500h4M7 16l3.500-7 3.500 7M8.500 14h4" /></svg>
          <Num v="73" /><span className="whitespace-nowrap">像素</span><Tri />
          <svg viewBox="0 0 18 16" className="h-4 w-[18px]" fill="none" stroke="#c4c4c4" strokeWidth="1.300"><path d="M0 1l3.500 9L7 1M9 10l3.500-9L16 10M10 7h5M5 12L10 0M15 13.500H9M11 11.500l-2 2 2 2" /></svg>
          <span className="col-span-2 whitespace-nowrap text-[#454545]">度量标准</span><Tri />
          <svg viewBox="0 0 18 17" className="h-[17px] w-[18px]" fill="none"><rect width="18" height="11" fill="#c4c4c4" /><path d="M2 2l3 7 3-7M10 9l3-7 3 7M11 7h4" stroke="#222" strokeWidth="1.200" /><path d="M1 14.500h16M3 12.500l-2 2 2 2M15 12.500l2 2-2 2" stroke="#c4c4c4" /></svg>
          <Num v="-15" /><span /><Tri />
        </div>
      </section>
      <section className="relative min-h-0 flex-1 overflow-hidden bg-[#232323]">
        <div className="flex pl-3.5"><Tab className="gap-3"><span className="text-[#c8c8c8]">跟踪器</span><MenuLines className="text-[#c8c8c8]" /></Tab></div>
        <div className="mt-[9px] grid w-[200px] grid-cols-[94px_98px] gap-x-1 gap-y-[5px] pl-2 text-[#a0a0a0]">
          {["跟踪摄像机", "变形稳定器", "跟踪运动", "稳定运动"].map((t) => (
            <button key={t} className="h-5 rounded-full border-2 border-[#5a5a5a] leading-4 whitespace-nowrap">{t}</button>
          ))}
        </div>
        <label className="mt-[3px] flex items-center pr-2 pl-[42px]">运动源:<Drop label="运动源" value="无" className="ml-1 h-[18px] flex-1" selectClass="pl-1" /></label>
        <p className="mt-0.5 pl-7 text-[12px] leading-4 text-[#383838]">当前跟踪:　无</p>
      </section>
      <button aria-label="展开" className="absolute right-0 bottom-7 flex h-[46px] w-4 items-center justify-end bg-[#191919] pr-0.5 text-[10px] text-[#d8d8d8]">◀</button>
    </aside>
  );
}

/* ---------- timeline ---------- */

const cols = "grid shrink-0 grid-cols-[15px_15px_15px_15px_20px_16px_18px_15px_21px_230px_3px_repeat(8,15px)_17px_68px_25px_65px_28px_90px_1fr] grid-rows-[100%] items-center";
const Cell = ({ children, className = "" }: Kids & { className?: string }) => <span className={`flex h-full items-center justify-center ${className}`}>{children}</span>;
const Slot = ({ children }: Kids) => <span className="mx-auto flex size-[14px] items-center justify-center bg-[#292929]">{children}</span>;
const Rule = ({ className = "" }: { className?: string }) => <span className={`h-3 w-px shrink-0 bg-black ${className}`} />;
const EyeIcon = () => <FaEye size={12} className="text-[#b8b8b8]" />;

type Layer = { n: number; name: string; color: string; open?: boolean; sel?: boolean; adj?: boolean; icon: React.ReactNode; menu?: boolean };
const layers: Layer[] = [
  { n: 1, name: "调整图层 1", color: "bg-[#a9a8cf]", adj: true, icon: <span className="size-[15px] bg-white" /> },
  { n: 2, name: "方框变化", color: "bg-[#b49e78]", sel: true, icon: <FilmIcon /> },
  { n: 3, name: "很大的虎课logo-文字-.png", color: "bg-[#a9a8cf]", open: true, icon: <PngIcon />, menu: true },
];

const matteOptions = ["没有轨道遮罩", "Alpha 遮罩“方框变化”", "Alpha 反转遮罩“方框变化”", "亮度遮罩“方框变化”", "亮度反转遮罩“方框变化”"];

function MatteMenu() {
  return (
    <div role="menu" className="absolute top-4 -left-px z-20 w-[244px] border border-[#d8d8d8] bg-[#f2f2f2] p-0.5 font-['Open_Sans','Noto_Sans_CJK_SC',sans-serif] text-[12px] text-black shadow-[2px_2px_3px_rgba(0,0,0,0.5)]">
      {matteOptions.map((o, i) => (
        <React.Fragment key={o}>
          <button role="menuitem" className={`relative flex h-[22px] w-full items-center whitespace-nowrap ${i === 1 ? "z-10 bg-[#91c9f7]" : ""}`}>
            <span className={`mr-2.5 flex h-full w-[22px] items-center justify-center ${i === 0 ? "bg-[#91c9f7]" : ""}`}>
              {i === 0 && <span className="size-1.5 rounded-full bg-[#123a5c]" />}
            </span>
            {o}
            {i === 1 && (
              <svg viewBox="0 0 12 19" className="absolute top-[17px] left-[92px] h-[19px] w-3"><path d="M.5.5v15l3.500-3.200 2.500 5.700 2.300-1-2.500-5.500h5z" fill="#fff" stroke="#000" /></svg>
            )}
          </button>
          {i === 0 && <div className="my-[3px] ml-[27px] h-px bg-[#c8c8c8]" />}
        </React.Fragment>
      ))}
    </div>
  );
}

function LayerRow({ l }: { l: Layer }) {
  return (
    <div className={`${cols} h-5 border-b border-[#232323] text-[12px] ${l.sel ? "bg-[#474747]" : "bg-[#303030]"}`}>
      <Cell><EyeIcon /></Cell><Cell /><Cell><Slot /></Cell><Cell><Slot /></Cell>
      <Cell><Chevron open={!!l.open} className="text-[#909090]" /></Cell>
      <span className={`size-[15px] ${l.color}`} />
      <Cell className="text-[#b8b8b8]">{l.n}</Cell><Cell />
      <Cell>{l.icon}</Cell>
      <Cell className={`justify-start! pl-1 ${mono} text-[11px] font-bold whitespace-pre ${l.sel ? "bg-[#a0a0a0] text-[#1a1a1a]" : "text-[#b0b0b0]"}`}>{l.name}</Cell>
      <span />
      <Cell><ShyIcon /></Cell><Slot /><Slot><SlashIcon /></Slot><Cell>{l.adj && <FxIcon />}</Cell><Cell />
      <Slot /><Slot>{l.adj && <AdjustIcon />}</Slot><Slot /><span />
      <Drop label={`图层 ${l.n} 模式`} value="正常" className="h-[19px] text-[12px]" selectClass="pl-[7px]" />
      <Cell><Slot /></Cell>
      {l.adj ? <span /> : (
        <div className="relative">
          <Drop label={`图层 ${l.n} 轨道遮罩`} value="无" className="h-[19px] text-[12px]" selectClass="pl-[7px]" />
          {l.menu && <MatteMenu />}
        </div>
      )}
      <Cell><SpiralIcon /></Cell>
      <Drop label={`图层 ${l.n} 父级`} value="无" className="h-[19px] text-[12px]" selectClass="pl-1.5" />
    </div>
  );
}

const caches = [[0, 7.5], [8.7, 1.6], [10.8, 0.4], [12.4, 0.8], [13.6, 0.4], [14.8, 0.8]];

const RangeEnds = () => (
  <>
    <span className="absolute inset-y-0 -left-1.5 w-1.5 rounded-l-full bg-[#2d8ceb]" />
    <span className="absolute inset-y-0 -right-1.5 w-1.5 rounded-r-full bg-[#2d8ceb]" />
  </>
);

function TimeGraph() {
  return (
    <div className="relative flex min-w-0 flex-1 flex-col border-l border-black pr-6 pl-[7px]">
      <div className="relative mt-[33px] h-2 bg-[#686868]"><RangeEnds /></div>
      <div className="relative h-[21px] border-y border-black text-[11px] text-[#a0a0a0]">
        {Array.from({ length: 11 }, (_, i) => (
          <React.Fragment key={i}>
            <span className="absolute bottom-0 h-1 w-px bg-[#808080]" style={{ left: `${i * 10}%` }} />
            <span className={`absolute -top-0.5 -translate-x-1/2 whitespace-pre ${i === 0 ? "pl-3.5" : ""}`} style={{ left: `${i * 10}%` }}>{i === 0 ? ":00s" : `${String(i).padStart(2, "0")}s`}</span>
          </React.Fragment>
        ))}
      </div>
      <div className="relative h-[15px] bg-[#5f5f5f]"><RangeEnds /></div>
      <div className="relative -mr-6 -ml-[7px] h-[5px] border-y border-black" />
      <div className="relative -mt-1 h-[3px]">
        {caches.map(([a, w]) => <span key={a} className="absolute h-full bg-[#2f9a38]" style={{ left: `${a}%`, width: `${w}%` }} />)}
      </div>
      <div className="-mr-[7px] -ml-[7px] flex min-h-0 flex-1 flex-col border-r-[7px] border-[#282828] bg-[#303030] pt-px">
        {[0, 1, 2].map((i) => (
          <div key={i} className={`h-5 border-b border-[#262626] pt-0.5 pl-[7px] ${i === 1 ? "bg-[#474747]" : "bg-[#343434]"}`}>
            {i === 1 ? (
              <div className="flex h-[17px] justify-between border-t border-[#d6c8ac] bg-[#9d8c6f]">
                <span className="size-0 border-t-[6px] border-r-[6px] border-t-black border-r-transparent" />
                <span className="size-0 border-t-[6px] border-l-[6px] border-t-black border-l-transparent" />
              </div>
            ) : <div className="h-4 bg-[#747488]" />}
          </div>
        ))}
        <div className="h-5 border-b border-[#262626]" />
      </div>
      <div className="pointer-events-none absolute inset-y-0 right-6 left-[7px]">
        <div className="absolute top-[34px] bottom-0 w-px bg-[#3f7fc8]" style={{ left: "15.2%" }}>
          <svg viewBox="0 0 12 15" className="absolute top-3 -left-[6px] h-[15px] w-[13px]"><path d="M0 0h12v8l-6 6-6-6z" fill="#2d8ceb" /><path d="M6 6v8" stroke="#0a1a2a" /></svg>
          <svg viewBox="0 0 8 12" className="absolute top-[110px] -left-1 h-3 w-2" stroke="#b8ccdc" fill="none"><path d="M0 .5h8M4 .5v11M0 11.500h8" /></svg>
        </div>
      </div>
      <svg viewBox="0 0 12 14" className="absolute top-[64px] right-0.5 h-3.5 w-3"><path d="M0 0h12v9l-6 5-6-5z" fill="#b8b8b8" /></svg>
      <svg viewBox="0 0 14 12" className="absolute top-[85px] right-0.5 h-3 w-3.5"><path d="M8 2h6v7H8z" fill="#b0b0b0" /><path d="M1 8l6-6v6" fill="none" stroke="#c0c0c0" strokeWidth="1.500" /><circle cx="7" cy="8" r="2.500" fill="#232323" stroke="#ccc" /></svg>
    </div>
  );
}

function Timeline() {
  return (
    <section className="flex min-h-0 flex-1 flex-col border-t-2 border-r-2 border-t-[#2c5b8c] border-r-[#2b6db0] bg-[#232323]">
      <div className="-mb-[25px] flex h-[25px] items-center">
        <Tab className="ml-6 w-[106px]">渲染队列</Tab>
        <Tab className="w-[114px] gap-3"><Swatch />合成 1</Tab>
        <Tab className="w-[134px] gap-3"><Swatch /><span>地图<span className="text-[11px]">+logo</span></span></Tab>
        <Tab className="w-[114px] gap-3"><Swatch />数字运动</Tab>
        <Tab active className="gap-3"><span className="w-[3px] text-[11px] text-[#808080]">×</span><Swatch /><span className="text-[11px]">logo</span><MenuLines /></Tab>
        <Tab className="ml-9 gap-3"><Swatch />方框变化</Tab>
      </div>
      <div className="flex min-h-0 flex-1">
        <div className="flex w-[815px] shrink-0 flex-col pt-[25px]">
          <div className="flex h-[37px] shrink-0 items-center">
            <div className="w-[119px]">
              <p className="pl-[19px] font-['Open_Sans',sans-serif] text-[14px] leading-4 font-bold text-[#2d8ceb]">0:00:01:13</p>
              <p className={`${mono} pl-1.5 text-[11px] leading-3 text-[#1f4a78]`}>00038 (25.00 fps)</p>
            </div>
            <label className="flex h-[19px] w-[528px] items-center border border-[#2a2a2a] bg-[#161616] pl-1">
              <Magnifier /><input aria-label="搜索图层" className="w-full bg-transparent outline-none" />
            </label>
            <div className="flex items-center pl-4 text-[#b8b8b8]">
              <svg viewBox="0 0 17 14" className="h-3.5 w-[17px]" fill="none" stroke="currentColor" strokeWidth="1.300"><path d="M0 3h9M4 1l3 2-3 2M9 3v8h3M9 7h3" /><path d="M10 2h6v2h-6zM12 6h4v2h-4zM12 10h4v2h-4z" fill="currentColor" stroke="none" /></svg>
              <svg viewBox="0 0 17 13" className="ml-4 h-[13px] w-[17px]"><path d="M0 7C1 3 4 0 8.500 0S16 3 17 7v5H0z" fill="#5c5c5c" /><path d="M5 7V4c0-2 1.500-3 3.500-3S12 2 12 4v3M2 7h13M5 10h7M8.500 1v11.500" stroke="#c8c8c8" strokeWidth="1.300" fill="none" /></svg>
              <svg viewBox="0 0 15 14" className="ml-3 h-3.5 w-[15px]"><path d="M3 0h12v11H3z" fill="#b8b8b8" /><path d="M.7 2v11.300H13" stroke="#b8b8b8" strokeWidth="1.200" fill="none" /><path d="M5 1v9M13 1v9" stroke="#222" strokeDasharray="1 1" /><path d="M7 3h4M7 5.500h4M7 8h4" stroke="#222" /></svg>
              <span className="ml-[11px]"><MotionBlurIcon /></span>
              <svg viewBox="0 0 16 15" className="ml-5 h-[15px] w-4" fill="none" stroke="currentColor" strokeWidth="1.200"><rect x="1" y="2.500" width="14" height="11.500" /><path d="M4 6c4 0 3 6 9 6M4 0v4M8 0v4M12 0v4" /></svg>
            </div>
          </div>
          <div className={`${cols} h-[21px] border-y border-black bg-[#303030] text-[13px] leading-[18px] text-[#c0c0c0]`}>
            <Cell><EyeIcon /></Cell><Cell><FaVolumeUp size={12} className="text-[#b8b8b8]" /></Cell>
            <Cell><span className="size-[7px] rounded-full bg-[#b8b8b8]" /></Cell><Cell><FaLock size={10} className="text-[#b8b8b8]" /></Cell>
            <Cell className="justify-start! pl-[3px]"><Rule /></Cell>
            <Cell><FaTag size={12} className="-scale-x-100 text-[#b8b8b8]" /></Cell>
            <Cell className="justify-start! gap-1.5 text-[11px]"><Rule />#</Cell><Cell className="justify-end!"><Rule /></Cell>
            <span className="col-span-2 pl-[7px]">源名称</span><Rule />
            <Cell><ShyIcon /></Cell><Cell><SunIcon /></Cell><Cell><SlashIcon back /></Cell><Cell><FxIcon /></Cell>
            <Cell><FrameBlendIcon /></Cell><Cell><MotionBlurIcon /></Cell><Cell><AdjustIcon /></Cell><Cell><Box size={11} className="text-[#b8b8b8]" /></Cell>
            <Cell><Rule /></Cell>
            <span className="col-span-3 pl-14 whitespace-nowrap">轨道遮罩</span>
            <span className="col-span-2 flex items-center gap-1.5 pl-1 whitespace-nowrap"><Rule />父级和链接</span>
            <Rule className="ml-0.5" />
          </div>
          {layers.map((l) => <LayerRow key={l.n} l={l} />)}
          <div className="flex h-5 items-center border-b border-[#1f1f1f] pl-[125px] text-[12px] text-[#a0a0a0]">
            <Timer size={13} /><span className={`ml-[7px] w-[238px] ${mono} text-[11px]`}>缩放</span>
            <Link size={12} strokeWidth={2.4} className="mr-1.5 rotate-45" />
            <span className={`${mono} text-[12px] text-[#2d8ceb]`}>54.0,54.0<span className="text-[#a0a0a0]">%</span></span>
          </div>
        </div>
        <TimeGraph />
      </div>
      <div className="flex h-[17px] items-center border-t border-black">
        <div className="flex w-[815px] items-center gap-1.5 pl-px text-[#2d8ceb]">
          <svg viewBox="0 0 13 13" className="size-3" fill="none" stroke="currentColor" strokeWidth="1.300"><path d="M1 1h6v7H1zM3.500 3.500h6v7h-6zM6 6h6v6H6z" /></svg>
          <svg viewBox="0 0 13 13" className="size-3" fill="none" stroke="currentColor" strokeWidth="1.300"><circle cx="5" cy="5" r="4" /><rect x="5" y="5" width="7" height="7" /></svg>
          <svg viewBox="0 0 10 13" className="h-3 w-2.5" fill="none" stroke="#b0b0b0" strokeWidth="1.500"><path d="M3 0v4L1 6.500 3 9v4M7 0v4l2 2.500L7 9v4M5 0v13" /></svg>
        </div>
        <svg viewBox="0 0 12 7" className="ml-1.5 h-1.5 w-2.5" fill="#b8b8b8"><path d="M0 6l4-3 2 1 2-3 3 5z" /></svg>
        <input type="range" aria-label="时间缩放" defaultValue={0} className="ml-2.5 h-0.5 w-[50px] appearance-none bg-[#3a3a3a] [&::-webkit-slider-thumb]:size-2.5 [&::-webkit-slider-thumb]:appearance-none [&::-webkit-slider-thumb]:rounded-full [&::-webkit-slider-thumb]:border-2 [&::-webkit-slider-thumb]:border-[#a8a8a8] [&::-webkit-slider-thumb]:bg-[#232323]" />
        <svg viewBox="0 0 16 8" className="ml-3 h-2 w-4" fill="#b8b8b8"><path d="M0 8l4-5 1.500 2L9 0l6 8z" /></svg>
      </div>
    </section>
  );
}

/* ---------- overlays ---------- */

function Notes() {
  return (
    <>
      <svg viewBox="0 0 320 130" className="pointer-events-none absolute top-[736px] left-[296px] h-[130px] w-[320px]" fill="#fb1d10">
        <path d="M5 1l11 14-6-2 26 105-2 1L3 16l-5 4z" />
        <path d="M118 85.500L293 74l-3-6 21 8-20 11 1-6-174 6z" />
      </svg>
      <div className="pointer-events-none absolute top-[873px] left-[312px] text-[21px] leading-7 text-[#fb1d10]">
        <p>1 点击预合成</p>
        <p>2 设置【遮罩】</p>
      </div>
    </>
  );
}

const swoosh = "M3 10c9 2 10 8 10 16v20M24 34V18c0-6 3-9 8-10M60 8c5 1 8 4 8 10v14c0 8-4 13-14 13H34c-6 0-10-3-10-10";

function Watermark() {
  return (
    <div className="pointer-events-none absolute top-[18px] right-4 flex items-center opacity-70">
      <svg viewBox="0 0 76 50" className="h-[50px] w-[76px]" fill="none" strokeLinecap="round">
        <defs>
          <mask id="rim" maskUnits="userSpaceOnUse" x="0" y="0" width="76" height="50">
            <g stroke="#fff" strokeWidth="7"><path d={swoosh} /><path d="M38 8v6M52 8v6M36 20h20M36 28h4M52 28h4" strokeWidth="5" /></g>
            <g stroke="#444" strokeWidth="5"><path d={swoosh} /><path d="M38 8v6M52 8v6M36 20h20M36 28h4M52 28h4" strokeWidth="3" /></g>
            <path d="M41 30l11 6-11 6z" fill="#fff" />
          </mask>
        </defs>
        <rect width="76" height="50" fill="#b4b8bc" mask="url(#rim)" />
      </svg>
      <span className="text-[46px] leading-[50px] font-medium text-white/30 [-webkit-text-stroke:1px_#b8bcc0]">虎课网</span>
    </div>
  );
}

export default function App() {
  return (
    <main className="relative flex h-screen min-h-[900px] flex-col overflow-hidden bg-[#161616] font-['Noto_Sans_CJK_SC',sans-serif] leading-normal">
      <Header />
      <div className="mt-0.5 mb-[3px] flex h-[550px] shrink-0 gap-1">
        <ProjectPanel />
        <CompPanel />
        <EffectsPanel />
        <RightColumn />
      </div>
      <Timeline />
      <div className="h-1 shrink-0 border-t border-[#2c5b8c] bg-[linear-gradient(90deg,#0f2f66_0_14%,#6ba8e4_14%)]" />
      <Notes />
      <Watermark />
    </main>
  );
}
